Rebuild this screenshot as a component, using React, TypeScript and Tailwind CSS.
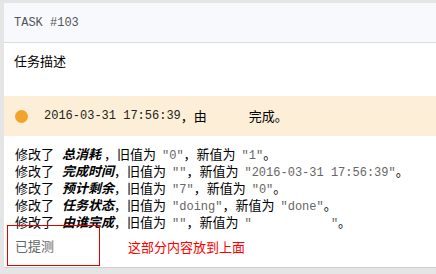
import React from "react";

const cjk = { fontFamily: '"Noto Sans CJK SC", "Noto Sans", sans-serif' };
const mono = { fontFamily: '"Liberation Mono", "Noto Sans CJK SC", monospace' };

function Val({ children }: { children: React.ReactNode }) {
  return (
    <span className="ml-[6px] text-[12px] leading-[17px] text-[#666]" style={mono}>
      ″{children}″
    </span>
  );
}

function Label({ children }: { children: React.ReactNode }) {
  return <span className="ml-[8px] font-bold italic text-black">{children}</span>;
}

export default function App() {
  const rows: [string, React.ReactNode, React.ReactNode][] = [
    ["总消耗 ", "0", "1"],
    ["完成时间", "", "2016-03-31 17:56:39"],
    ["预计剩余", "7", "0"],
    ["任务状态", "doing", "done"],
    ["由谁完成", "", "\u00a0\u00a0\u00a0\u00a0\u00a0\u00a0\u00a0\u00a0\u00a0\u00a0\u00a0"],
  ];
  return (
    <div className="w-[436px] h-[274px] bg-[#e5e5e5] pt-[3px] pl-[4px] overflow-hidden" style={cjk}>
      <div className="bg-white h-[265px] border-b border-[#cfcfcf] flex flex-col">
        <div className="h-[40px] bg-[#f8f9fd] border-b border-[#dcdcdc] flex items-center pl-[10px] shrink-0">
          <span className="text-[12px] text-[#555]" style={mono}>
            TASK #103
          </span>
        </div>
        <div className="pl-[10px] pt-[9px] text-[13px] leading-[17px] text-black h-[53px] shrink-0">任务描述</div>
        <div className="h-[40px] bg-[#fdefd7] flex items-center shrink-0">
          <div className="ml-[11px] w-[13px] h-[13px] rounded-full bg-[#f2a32a]" />
          <span className="ml-[16px] text-[12px] text-[#222]" style={mono}>
            2016-03-31 17:56:39
          </span>
          <span className="text-[13px] text-black">，由</span>
          <span className="inline-block w-[42px]" />
          <span className="text-[13px] text-black">完成。</span>
        </div>
        <div className="pl-[11px] pt-[9px] text-[13px] leading-[17px] text-black shrink-0">
          {rows.map(([l, o, n], i) => (
            <div key={i} className="whitespace-pre h-[17px]">
              修改了<Label>{l}</Label>，旧值为<Val>{o}</Val>，新值为<Val>{n}</Val>。
            </div>
          ))}
        </div>
        <div className="flex items-center -mt-[5px]">
          <div className="ml-[3px] w-[93px] h-[41px] border border-[#e00000] flex items-center pl-[7px] text-[13px] text-[#666]">
            已提测
          </div>
          <span className="ml-[28px] mt-[2px] text-[13px] text-[#ff0000]">这部分内容放到上面</span>
        </div>
      </div>
    </div>
  );
}
